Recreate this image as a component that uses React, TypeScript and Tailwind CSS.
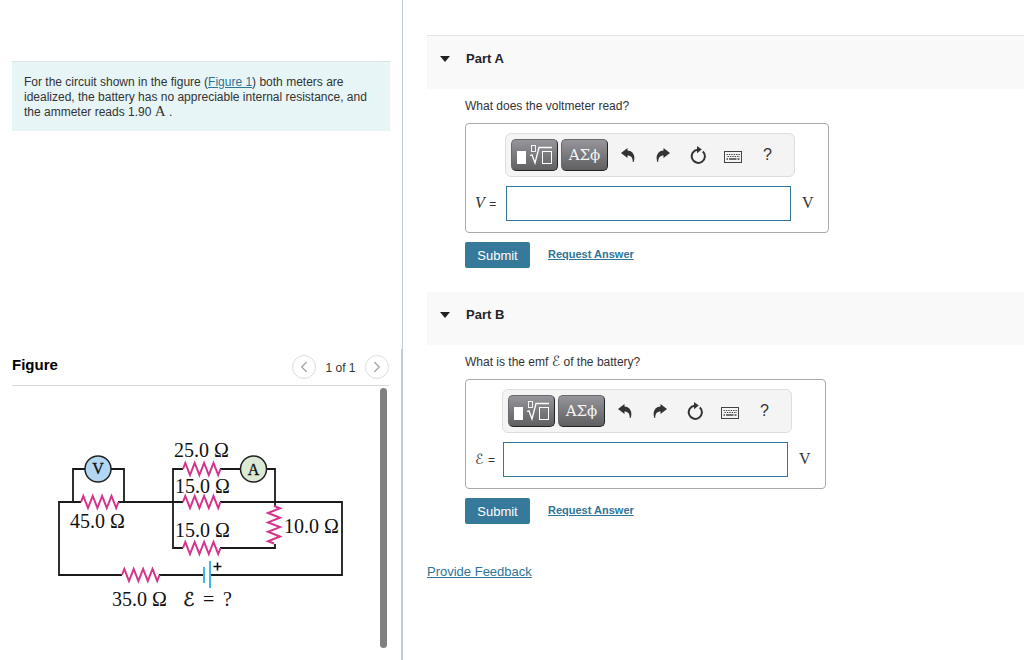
import { useState } from "react"
import type { ReactNode } from "react"
import { ChevronLeft, ChevronRight } from "lucide-react"

function UndoIcon({ className = "" }: { className?: string }) {
  return (
    <svg width="14" height="14" viewBox="0 0 14 14" fill="#333" className={className} aria-hidden="true">
      <path d="M0 5 L6.5 0 V2.6 C11.5 2.8 15 7.5 12.6 14 H11.8 C11.8 9.5 10 7.4 6.5 7.4 V10 Z" />
    </svg>
  )
}

function ResetIcon() {
  return (
    <svg width="16" height="18" viewBox="0 0 16 18" fill="none" aria-hidden="true">
      <path d="M12.8 5.4 A6.6 6.6 0 1 1 7.6 3.7" stroke="#333" strokeWidth="2" />
      <path d="M7 0 L11.8 3.5 L7 7.2 Z" fill="#333" />
    </svg>
  )
}

function KeyboardIcon() {
  return (
    <svg width="18" height="12" viewBox="0 0 18 12" fill="none" stroke="#444" aria-hidden="true">
      <rect x="0.5" y="0.5" width="17" height="11" />
      <path d="M2.5 3.5 H16 M3.5 5.5 H16" strokeDasharray="1.4 1" />
      <path d="M2.5 8 H4 M5 8 H12.5 M13.5 8 H15.5" strokeWidth="1.4" />
    </svg>
  )
}

function TemplateIcon() {
  return (
    <svg width="36" height="20" viewBox="0 0 36 20" fill="none" stroke="#fff" aria-hidden="true">
      <rect x="0" y="6" width="9" height="13" fill="#fff" stroke="none" />
      <rect x="14.5" y="0.5" width="4" height="6" strokeWidth="0.9" />
      <path d="M13 10.5 L15 9.8 L18 18 L22 2.5 H35" strokeWidth="1.3" />
      <rect x="25.5" y="6.5" width="9" height="12" strokeWidth="1" />
    </svg>
  )
}

const darkButton =
  "flex h-8 w-[47px] items-center justify-center rounded-[5px] border border-[#6a6a6e] border-r-[#222] border-b-[#222] bg-gradient-to-b from-[#95959b] to-[#606062] text-[#f4f4f4]"
const iconButton = "flex h-8 w-[35px] items-center justify-center"

function Toolbar() {
  return (
    <div className="flex h-11 w-[290px] items-center rounded-md border border-[#dedede] bg-[#f4f4f4] pl-[5px]">
      <button type="button" aria-label="Templates" className={darkButton}>
        <TemplateIcon />
      </button>
      <button type="button" aria-label="Symbols" className={`${darkButton} mr-0.5 ml-[3px] font-['DejaVu_Serif',serif] text-[15px]`}>
        ΑΣϕ
      </button>
      <button type="button" aria-label="Undo" className={iconButton}>
        <UndoIcon />
      </button>
      <button type="button" aria-label="Redo" className={iconButton}>
        <UndoIcon className="-scale-x-100" />
      </button>
      <button type="button" aria-label="Reset" className={iconButton}>
        <ResetIcon />
      </button>
      <button type="button" aria-label="Keyboard shortcuts" className={`${iconButton} pt-1`}>
        <KeyboardIcon />
      </button>
      <button type="button" aria-label="Help" className={`${iconButton} text-base text-[#333]`}>
        ?
      </button>
    </div>
  )
}

interface PartProps {
  id: string
  title: string
  question: ReactNode
  symbol: ReactNode
  labelWidth: string
  headerClass?: string
}

function Part({ id, title, question, symbol, labelWidth, headerClass = "" }: PartProps) {
  const [answer, setAnswer] = useState("")

  return (
    <section className="mb-6">
      <header className={`bg-[#f9f9f9] ${headerClass}`}>
        <h2 className="flex h-[53px] items-center pb-2 pl-[13px] text-[13px] font-bold text-[#252525]">
          <svg width="10" height="6" viewBox="0 0 10 6" className="mr-4" aria-hidden="true">
            <path d="M0 0 H10 L5 6 Z" fill="#222" />
          </svg>
          {title}
        </h2>
      </header>
      <div className="pt-2.5 pl-[38px]">
        <p className="h-[15px] text-xs leading-[15px] whitespace-nowrap">{question}</p>
        <div className="mt-[9px] w-fit rounded-[4px] border border-[#aaa] pt-[9px] pr-3.5 pb-[11px] pl-[9px]">
          <div className="flex">
            <div className={`${labelWidth} shrink-0`} />
            <Toolbar />
          </div>
          <div className="mt-[9px] flex items-center">
            <label htmlFor={id} className={`${labelWidth} mr-px shrink-0 pb-0.5 whitespace-nowrap`}>
              {symbol} <span className="text-xs">=</span>
            </label>
            <input
              id={id}
              type="text"
              value={answer}
              onChange={(e) => setAnswer(e.target.value)}
              className="h-[35px] w-[285px] border border-[#34799b] bg-white px-2 outline-none"
            />
            <span className="ml-[11px] pb-0.5 font-['Liberation_Serif',serif] text-base leading-4">V</span>
          </div>
        </div>
        <div className="mt-[9px] flex items-center">
          <button type="button" className="h-[26px] w-[65px] rounded-[2px] bg-[#36799b] pt-0.5 text-[13px] text-white">
            Submit
          </button>
          <a href="#request" className="ml-[18px] pb-0.5 text-[11px] leading-4 font-bold text-[#2f7596] underline">
            Request Answer
          </a>
        </div>
      </div>
    </section>
  )
}

const zigzag = "l2.3 -6 l4.7 12 l4.7 -12 l4.7 12 l4.7 -12 l4.7 12 l4.7 -12 l4.7 12 l2.3 -6"

function Resistor({ x, y, vertical = false }: { x: number; y: number; vertical?: boolean }) {
  return (
    <path
      d={`M0 0 ${zigzag}`}
      transform={`translate(${x} ${y})${vertical ? " rotate(90)" : ""}`}
      fill="none"
      stroke="#d5348c"
      strokeWidth="2"
    />
  )
}

const values = [
  { x: 162, y: 71, text: "25.0 Ω" },
  { x: 163, y: 107, text: "15.0 Ω" },
  { x: 163, y: 151, text: "15.0 Ω" },
  { x: 58, y: 142, text: "45.0 Ω" },
  { x: 272, y: 147, text: "10.0 Ω" },
  { x: 100, y: 220, text: "35.0 Ω" },
  { x: 191, y: 220, text: "=" },
  { x: 211, y: 220, text: "?" },
]

function Circuit() {
  return (
    <svg width="368" height="262" viewBox="0 0 368 262" className="font-['Liberation_Serif',serif]" role="img" aria-label="Circuit">
      <g fill="none" stroke="#1a1a1a" strokeWidth="1.8">
        <path d="M69 116 H47 V189 H110 M147 189 H192 M198 189 H330 V116 H208" />
        <path d="M61 116 V83 H112 V116 M106 116 H171" />
        <path d="M171 83 H161 V162 H171 M208 83 H263 V121 M208 162 H263 V158" />
      </g>
      <Resistor x={69} y={116} />
      <Resistor x={171} y={83} />
      <Resistor x={171} y={116} />
      <Resistor x={171} y={162} />
      <Resistor x={110} y={189} />
      <Resistor x={262} y={120} vertical />
      <g stroke="#45b5e8" strokeWidth="2">
        <path d="M192 181 V197" />
        <path d="M198 175 V202" />
      </g>
      <path d="M201.5 180.5 h8 M205.5 176.5 v8" stroke="#111" strokeWidth="1.6" />
      <circle cx="86" cy="83" r="13" fill="#b3d7f2" stroke="#222" strokeWidth="1.5" />
      <circle cx="241.5" cy="83" r="13" fill="#dcead5" stroke="#222" strokeWidth="1.5" />
      <g fill="#111" stroke="#111" strokeWidth="0.3" textAnchor="middle" fontSize="16">
        <text x="86" y="88">V</text>
        <text x="241.5" y="89">A</text>
      </g>
      <g fill="#111" fontSize="20">
        {values.map((v) => (
          <text key={`${v.x}-${v.y}`} x={v.x} y={v.y}>
            {v.text}
          </text>
        ))}
        <text x="171" y="220" fontSize="19" fontStyle="italic" stroke="#111" strokeWidth="0.4" fontFamily="DejaVu Sans">
          ℰ
        </text>
      </g>
    </svg>
  )
}

const navButton = "flex size-6 items-center justify-center rounded-full border border-[#ddd] text-[#aaa]"

export default function App() {
  return (
    <div className="flex min-h-screen bg-white font-['Liberation_Sans',Arial,sans-serif] text-[#333]">
      <aside className="flex w-[403px] shrink-0 flex-col">
        <div className="h-[349px] border-r border-[#bccbdf] pt-[61px] pr-3 pl-3">
          <p className="border-t border-[#dde3e3] bg-[#e8f5f6] px-3 pt-[13px] pb-[11px] text-xs leading-[15px]">
            For the circuit shown in the figure (
            <a href="#figure" className="text-[#2f7596] underline">Figure 1</a>) both meters are idealized, the battery has no
            appreciable internal resistance, and the ammeter reads 1.90{" "}
            <span className="font-['Liberation_Serif',serif] text-[15px] leading-3">A</span> .
          </p>
        </div>
        <div id="figure" className="flex-1 border-r-2 border-[#bccbdf] pr-3 pl-3">
          <div className="flex h-[37px] items-center border-b border-[#d8d8d8]">
            <h2 className="flex-1 pb-1 text-[15px] font-bold text-black">Figure</h2>
            <button type="button" aria-label="Previous figure" className={navButton}>
              <ChevronLeft size={18} strokeWidth={2} />
            </button>
            <span className="w-[49px] pt-0.5 text-center text-xs">1 of 1</span>
            <button type="button" aria-label="Next figure" className={navButton}>
              <ChevronRight size={18} strokeWidth={2} />
            </button>
          </div>
          <div className="flex">
            <Circuit />
            <div className="mt-0.5 h-[260px] w-[7px] rounded-full bg-[#808080]" />
          </div>
        </div>
      </aside>
      <main className="min-w-0 flex-1 pt-[35px] pl-6">
        <Part
          id="answer-a"
          title="Part A"
          headerClass="border-t border-[#e6e6e6]"
          labelWidth="w-[30px]"
          question="What does the voltmeter read?"
          symbol={<i className="font-['Liberation_Serif',serif] text-base leading-4">V</i>}
        />
        <Part
          id="answer-b"
          title="Part B"
          labelWidth="w-[27px]"
          question={
            <>
              What is the emf <span className="font-['DejaVu_Sans',sans-serif] text-sm leading-3 italic">ℰ</span> of the battery?
            </>
          }
          symbol={<span className="font-['DejaVu_Sans',sans-serif] text-sm leading-4 italic">ℰ</span>}
        />
        <a href="#feedback" className="mt-4 inline-block text-[13px] leading-4 text-[#2f7596] underline">
          Provide Feedback
        </a>
      </main>
    </div>
  )
}
